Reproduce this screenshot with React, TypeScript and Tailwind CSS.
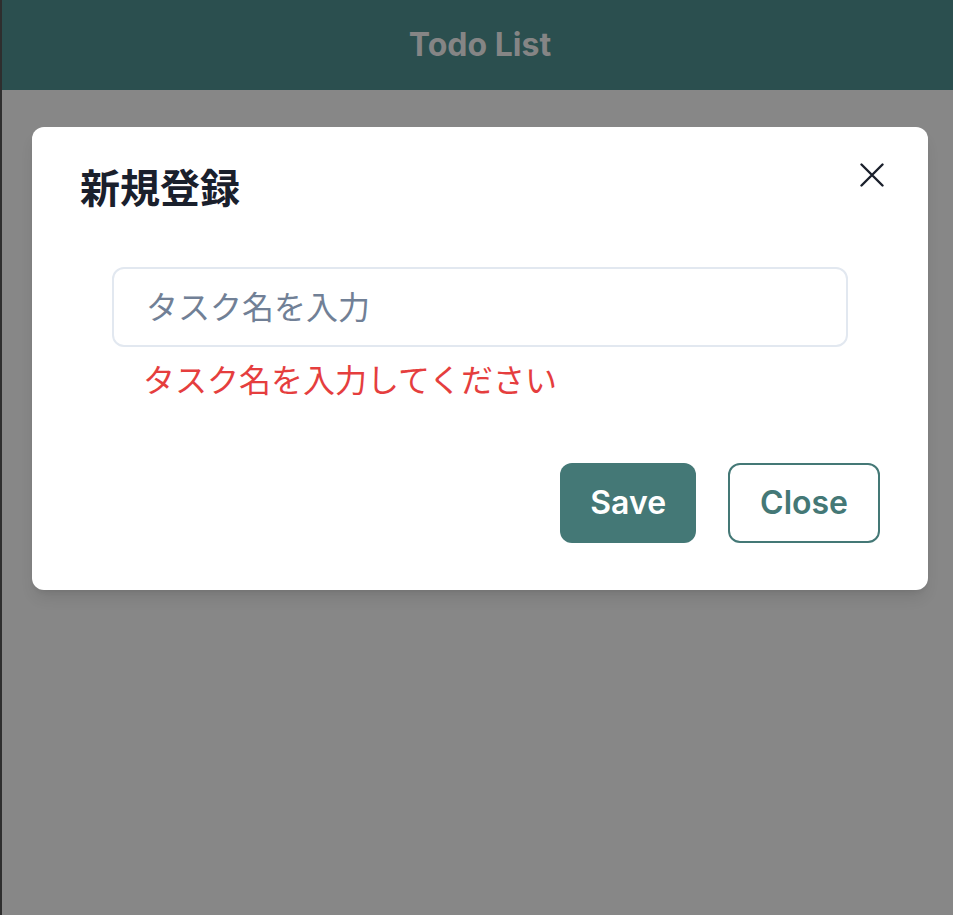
const CloseIcon = () => (
	<svg viewBox="0 0 24 24" className="h-[24px] w-[24px]" fill="none" stroke="#1a202c" strokeWidth="2.4" strokeLinecap="round">
		<path d="M1.5 1.5L22.5 22.5M22.5 1.5L1.5 22.5" />
	</svg>
);

const App = () => {
	return (
		<div className="flex h-[915px] w-[953px] flex-col border-l-2 border-[#2e2e2e] bg-[#878787] font-['Inter','Noto_Sans_CJK_JP',sans-serif]">
			<header className="flex h-[90px] shrink-0 items-center justify-center bg-[#2b4f4f] pl-[5px]">
				<h1 className="text-[32px] font-bold text-[#858585]">Todo List</h1>
			</header>
			<div className="pl-[30px] pt-[37px]">
				<div className="relative w-[896px] rounded-[12px] bg-white shadow-lg">
					<button className="absolute right-[24px] top-[16px] flex h-[64px] w-[64px] items-center justify-center rounded-[12px]">
						<CloseIcon />
					</button>
					<div className="px-[48px] pb-[32px] pt-[32px]">
						<h2 className="text-[40px] font-bold leading-[60px] text-[#1a202c]">
							新規登録
						</h2>
					</div>
					<div className="px-[80px] pt-[16px]">
						<input
							placeholder="タスク名を入力"
							className="h-[80px] w-full rounded-[12px] border-2 border-[#e2e8f0] px-[32px] text-[32px] text-[#1a202c] outline-none placeholder:text-[#718096]"
						/>
						<p className="ml-[31px] mt-[10px] text-[32px] leading-[48px] text-[#e53e3e]">
							タスク名を入力してください
						</p>
					</div>
					<div className="flex justify-end gap-[32px] px-[48px] pb-[47px] pt-[58px]">
						<button className="h-[80px] rounded-[12px] bg-[#447876] px-[30px] text-[32px] font-semibold text-white">
							Save
						</button>
						<button className="h-[80px] rounded-[12px] border-2 border-[#447876] bg-white px-[30px] text-[32px] font-semibold text-[#447876]">
							Close
						</button>
					</div>
				</div>
			</div>
		</div>
	);
};

export default App;
